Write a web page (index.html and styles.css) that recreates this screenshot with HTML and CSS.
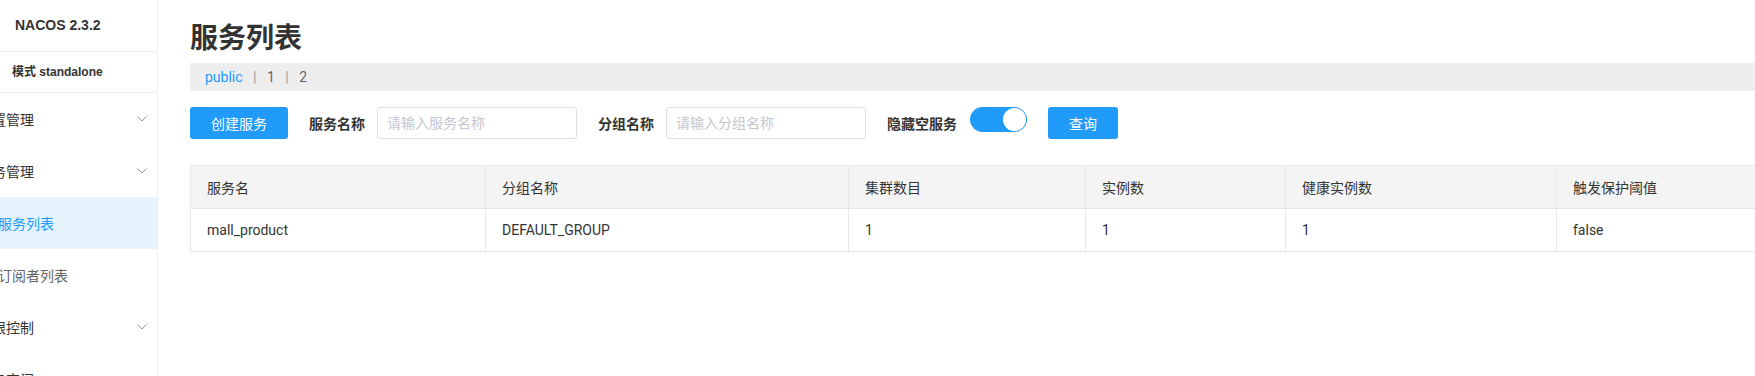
FILE: index.html
```html
<!DOCTYPE html>
<html lang="zh-CN">
<head>
    <meta charset="UTF-8">
    <title>Nacos - 服务列表</title>
    <link rel="stylesheet" href="styles.css">
</head>
<body>

    <div class="layout">
        <aside class="sidebar">
            <div class="brand">NACOS 2.3.2</div>
            <div class="mode">模式 standalone</div>
            <ul class="menu">
                <li class="menu-item">
                    <span>配置管理</span>
                    <svg class="chevron" width="10" height="6" viewBox="0 0 10 6"><path d="M0.5 0.5 L5 5 L9.5 0.5" fill="none" stroke="#999" stroke-width="1"/></svg>
                </li>
                <li class="menu-item">
                    <span>服务管理</span>
                    <svg class="chevron" width="10" height="6" viewBox="0 0 10 6"><path d="M0.5 0.5 L5 5 L9.5 0.5" fill="none" stroke="#999" stroke-width="1"/></svg>
                </li>
                <li class="menu-item sub active"><span>服务列表</span></li>
                <li class="menu-item sub"><span>订阅者列表</span></li>
                <li class="menu-item">
                    <span>权限控制</span>
                    <svg class="chevron" width="10" height="6" viewBox="0 0 10 6"><path d="M0.5 0.5 L5 5 L9.5 0.5" fill="none" stroke="#999" stroke-width="1"/></svg>
                </li>
                <li class="menu-item"><span>命名空间</span></li>
            </ul>
        </aside>

        <main class="content">
            <h1 class="page-title">服务列表</h1>

            <div class="namespace-bar">
                <span class="ns current">public</span>
                <span class="sep">|</span>
                <span class="ns">1</span>
                <span class="sep">|</span>
                <span class="ns">2</span>
            </div>

            <div class="toolbar">
                <button class="btn">创建服务</button>
                <label class="field-label" for="serviceName">服务名称</label>
                <input class="field-input" type="text" id="serviceName" placeholder="请输入服务名称">
                <label class="field-label" for="groupName">分组名称</label>
                <input class="field-input" type="text" id="groupName" placeholder="请输入分组名称">
                <span class="field-label switch-label">隐藏空服务</span>
                <span class="switch on"><span class="knob"></span></span>
                <button class="btn">查询</button>
            </div>

            <table class="service-table">
                <colgroup>
                    <col style="width: 295px">
                    <col style="width: 363px">
                    <col style="width: 237px">
                    <col style="width: 200px">
                    <col style="width: 271px">
                    <col style="width: 260px">
                </colgroup>
                <thead>
                    <tr>
                        <th>服务名</th>
                        <th>分组名称</th>
                        <th>集群数目</th>
                        <th>实例数</th>
                        <th>健康实例数</th>
                        <th>触发保护阈值</th>
                    </tr>
                </thead>
                <tbody>
                    <tr>
                        <td>mall_product</td>
                        <td>DEFAULT_GROUP</td>
                        <td>1</td>
                        <td>1</td>
                        <td>1</td>
                        <td>false</td>
                    </tr>
                </tbody>
            </table>
        </main>
    </div>

</body>
</html>
```

FILE: styles.css
```css
body {
    margin: 0;
    padding: 0;
    background-color: #fff;
    font-family: Roboto, "Noto Sans CJK SC", sans-serif;
    font-size: 14px;
    color: #333;
    overflow: hidden;
}

.layout {
    display: flex;
    height: 100vh;
}

/* sidebar */
.sidebar {
    flex: 0 0 157px;
    border-right: 1px solid #eee;
    overflow: hidden;
}

.brand {
    height: 51px;
    line-height: 51px;
    padding-left: 15px;
    border-bottom: 1px solid #eee;
    font-family: "Liberation Sans", Arial, sans-serif;
    font-weight: bold;
    font-size: 14px;
    color: #333;
}

.mode {
    height: 40px;
    line-height: 40px;
    padding-left: 12px;
    border-bottom: 1px solid #eee;
    font-family: "Liberation Sans", "Noto Sans CJK SC", sans-serif;
    font-weight: bold;
    font-size: 12px;
    color: #333;
}

.menu {
    list-style: none;
    margin: 0 0 0 -22px;
    padding: 0;
}

.menu-item {
    display: flex;
    align-items: center;
    justify-content: space-between;
    height: 52px;
    padding-right: 10px;
    white-space: nowrap;
    color: #333;
}

.menu-item.sub {
    padding-left: 20px;
    color: #666;
}

.menu-item.active {
    background-color: #e5f3ff;
    color: #209bfa;
}

.chevron {
    flex: none;
}

/* main */
.content {
    flex: 1;
    padding: 21px 0 0 32px;
    min-width: 0;
}

.page-title {
    margin: 0;
    font-size: 28px;
    line-height: 36px;
    font-weight: bold;
    color: #333;
}

.namespace-bar {
    margin-top: 6px;
    height: 28px;
    line-height: 28px;
    padding-left: 15px;
    background-color: #eee;
    color: #666;
}

.ns.current {
    color: #209bfa;
}

.sep {
    margin: 0 7px;
    color: #999;
}

.toolbar {
    display: flex;
    align-items: center;
    margin-top: 16px;
    height: 32px;
}

.btn {
    height: 32px;
    padding: 0 21px;
    border: none;
    border-radius: 3px;
    background-color: #209bfa;
    color: #fff;
    font-family: inherit;
    font-size: 14px;
    cursor: pointer;
}

.field-label {
    margin: 0 12px 0 21px;
    font-weight: bold;
    color: #333;
}

.field-input {
    box-sizing: border-box;
    width: 200px;
    height: 32px;
    padding: 0 9px;
    border: 1px solid #dcdee3;
    border-radius: 3px;
    font-family: inherit;
    font-size: 14px;
}

.field-input::placeholder {
    color: #c4c6cf;
}

.switch-label {
    margin-right: 13px;
}

.switch {
    position: relative;
    align-self: flex-start;
    width: 57px;
    height: 25px;
    border-radius: 13px;
    background-color: #209bfa;
    margin-right: 21px;
}

.switch .knob {
    position: absolute;
    top: 1px;
    right: 1px;
    width: 23px;
    height: 23px;
    border-radius: 50%;
    background-color: #fff;
}

.service-table {
    margin-top: 26px;
    width: 1626px;
    table-layout: fixed;
    border-collapse: collapse;
    border: 1px solid #e6e7eb;
}

.service-table th,
.service-table td {
    height: 42px;
    padding: 0 16px;
    border: 1px solid #e6e7eb;
    text-align: left;
    font-weight: normal;
    color: #333;
}

.service-table th {
    background-color: #f4f4f4;
}
```
